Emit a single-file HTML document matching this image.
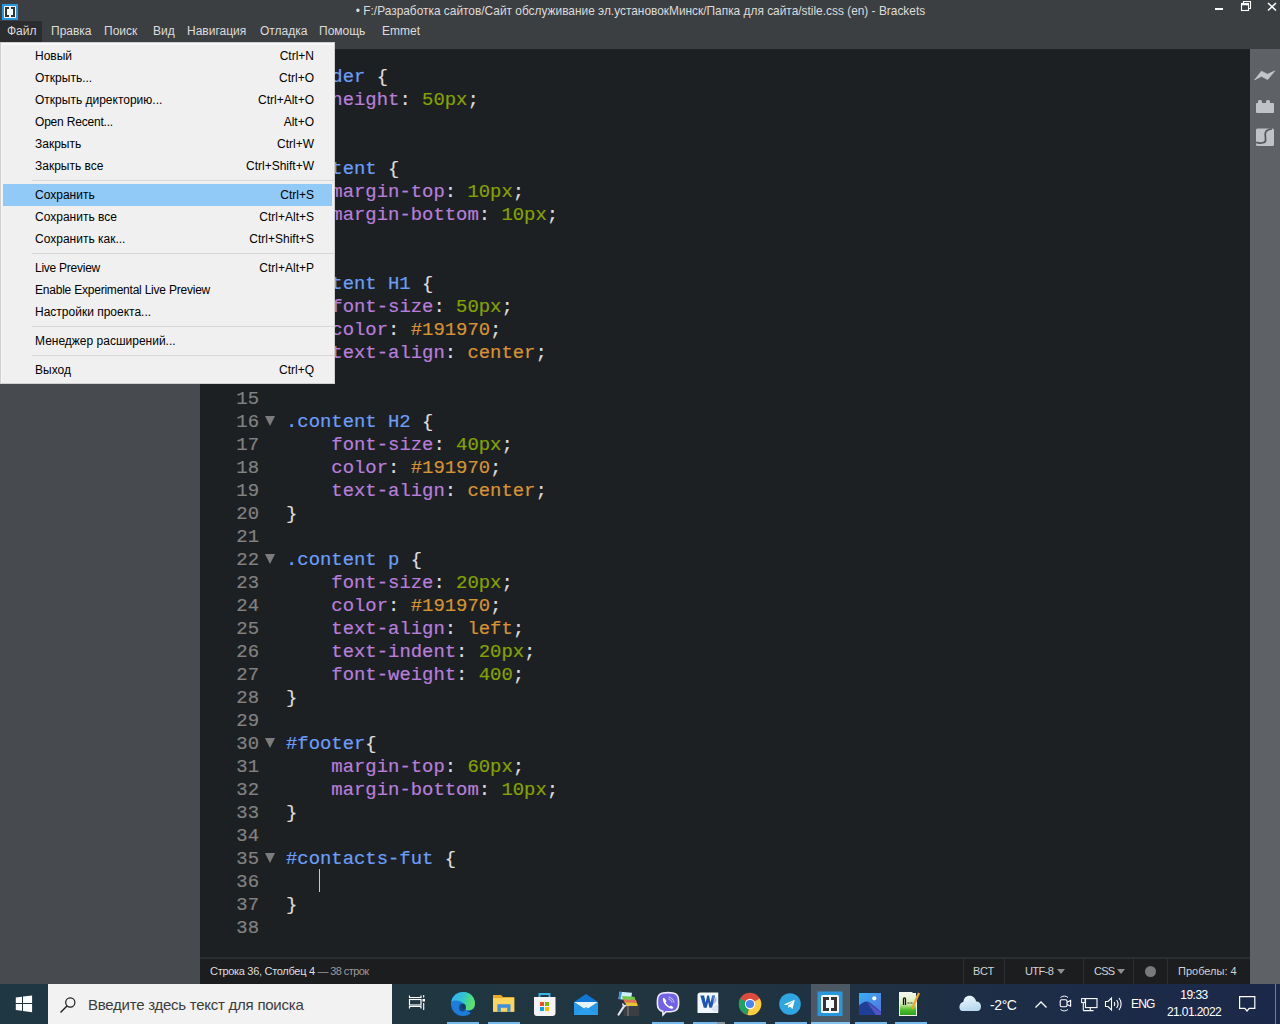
<!DOCTYPE html>
<html><head><meta charset="utf-8">
<style>
*{margin:0;padding:0;box-sizing:border-box}
html,body{width:1280px;height:1024px;overflow:hidden;background:#3c3f41;font-family:"Liberation Sans",sans-serif}
.abs{position:absolute}
#title{left:0;top:0;width:1280px;height:49px;background:#3c3f41}
#ttext{left:0;top:3px;width:1280px;text-align:center;color:#dcdcdc;font-size:11.9px;line-height:16px;white-space:nowrap;padding-left:1px}
.mb{top:23px;color:#dcdcdc;font-size:12px;line-height:16px;white-space:nowrap}
#sidebar{left:0;top:49px;width:200px;height:935px;background:#474a4e}
#editor{left:200px;top:49px;width:1050px;height:908px;background:#1d2023}
#rtool{left:1250px;top:49px;width:30px;height:935px;background:#5e6165}
#status{left:200px;top:957px;width:1050px;height:27px;background:#1c1d1f;border-top:2px solid #2b2d30}
.st{color:#d2d2d2;font-size:11px;line-height:14px;white-space:nowrap;top:964px}
.sep{top:959px;width:1px;height:25px;background:#2c2e31}
#code{left:200px;top:49px;width:1050px;height:908px;font-family:"Liberation Mono",monospace;font-size:18.9px;white-space:pre;-webkit-text-stroke:0.2px}
.ln{position:absolute;left:0;width:59px;text-align:right;color:#828282;height:23px;line-height:23px}
.cl{position:absolute;left:86px;color:#dddddd;height:23px;line-height:23px}
.p{color:#b77fdb}.n{color:#85a300}.q{color:#6c9ef8}.a{color:#d89333}
.fold{position:absolute;left:65px;width:0;height:0;border-left:5px solid transparent;border-right:5px solid transparent;border-top:10px solid #7c7c7c}
#menu{left:0;top:42px;width:335px;height:342px;background:#f0f0f0;border:1px solid #cfcfcf;box-shadow:inset 1px 2px 0 #f8f8f8}
.mi{position:absolute;left:34px;font-size:12px;line-height:16px;color:#000;white-space:nowrap}
.mk{position:absolute;right:20px;font-size:12px;line-height:16px;color:#000;white-space:nowrap;text-align:right}
.msep{position:absolute;left:31px;width:302px;height:1px;background:#d7d7d7}
#taskbar{left:0;top:984px;width:1280px;height:40px;background:linear-gradient(90deg,#1f3742 0%,#20353f 50%,#1f3143 68%,#1c2b48 85%,#1c2849 100%)}
.tb{color:#ffffff;font-size:12px;line-height:15px;white-space:nowrap}
</style></head><body>
<div id="title" class="abs"></div>
<div id="ttext" class="abs">• F:/Разработка сайтов/Сайт обслуживание эл.установокМинск/Папка для сайта/stile.css (en) - Brackets</div>
<div id="sidebar" class="abs"></div>
<div id="editor" class="abs"></div>
<div id="rtool" class="abs"></div>
<div id="status" class="abs"></div>
<div id="code" class="abs">
<div class="ln" style="top:17px">1</div>
<div class="fold" style="top:22px"></div>
<div class="cl" style="top:17px"><span class="q">#header</span> {</div>
<div class="ln" style="top:40px">2</div>
<div class="cl" style="top:40px">    <span class="p">height</span>: <span class="n">50px</span>;</div>
<div class="ln" style="top:63px">3</div>
<div class="cl" style="top:63px">}</div>
<div class="ln" style="top:86px">4</div>
<div class="ln" style="top:109px">5</div>
<div class="fold" style="top:114px"></div>
<div class="cl" style="top:109px"><span class="q">.content</span> {</div>
<div class="ln" style="top:132px">6</div>
<div class="cl" style="top:132px">    <span class="p">margin-top</span>: <span class="n">10px</span>;</div>
<div class="ln" style="top:155px">7</div>
<div class="cl" style="top:155px">    <span class="p">margin-bottom</span>: <span class="n">10px</span>;</div>
<div class="ln" style="top:178px">8</div>
<div class="cl" style="top:178px">}</div>
<div class="ln" style="top:201px">9</div>
<div class="ln" style="top:224px">10</div>
<div class="fold" style="top:229px"></div>
<div class="cl" style="top:224px"><span class="q">.content H1</span> {</div>
<div class="ln" style="top:247px">11</div>
<div class="cl" style="top:247px">    <span class="p">font-size</span>: <span class="n">50px</span>;</div>
<div class="ln" style="top:270px">12</div>
<div class="cl" style="top:270px">    <span class="p">color</span>: <span class="a">#191970</span>;</div>
<div class="ln" style="top:293px">13</div>
<div class="cl" style="top:293px">    <span class="p">text-align</span>: <span class="a">center</span>;</div>
<div class="ln" style="top:316px">14</div>
<div class="ln" style="top:339px">15</div>
<div class="ln" style="top:362px">16</div>
<div class="fold" style="top:367px"></div>
<div class="cl" style="top:362px"><span class="q">.content H2</span> {</div>
<div class="ln" style="top:385px">17</div>
<div class="cl" style="top:385px">    <span class="p">font-size</span>: <span class="n">40px</span>;</div>
<div class="ln" style="top:408px">18</div>
<div class="cl" style="top:408px">    <span class="p">color</span>: <span class="a">#191970</span>;</div>
<div class="ln" style="top:431px">19</div>
<div class="cl" style="top:431px">    <span class="p">text-align</span>: <span class="a">center</span>;</div>
<div class="ln" style="top:454px">20</div>
<div class="cl" style="top:454px">}</div>
<div class="ln" style="top:477px">21</div>
<div class="ln" style="top:500px">22</div>
<div class="fold" style="top:505px"></div>
<div class="cl" style="top:500px"><span class="q">.content p</span> {</div>
<div class="ln" style="top:523px">23</div>
<div class="cl" style="top:523px">    <span class="p">font-size</span>: <span class="n">20px</span>;</div>
<div class="ln" style="top:546px">24</div>
<div class="cl" style="top:546px">    <span class="p">color</span>: <span class="a">#191970</span>;</div>
<div class="ln" style="top:569px">25</div>
<div class="cl" style="top:569px">    <span class="p">text-align</span>: <span class="a">left</span>;</div>
<div class="ln" style="top:592px">26</div>
<div class="cl" style="top:592px">    <span class="p">text-indent</span>: <span class="n">20px</span>;</div>
<div class="ln" style="top:615px">27</div>
<div class="cl" style="top:615px">    <span class="p">font-weight</span>: <span class="n">400</span>;</div>
<div class="ln" style="top:638px">28</div>
<div class="cl" style="top:638px">}</div>
<div class="ln" style="top:661px">29</div>
<div class="ln" style="top:684px">30</div>
<div class="fold" style="top:689px"></div>
<div class="cl" style="top:684px"><span class="q">#footer</span>{</div>
<div class="ln" style="top:707px">31</div>
<div class="cl" style="top:707px">    <span class="p">margin-top</span>: <span class="n">60px</span>;</div>
<div class="ln" style="top:730px">32</div>
<div class="cl" style="top:730px">    <span class="p">margin-bottom</span>: <span class="n">10px</span>;</div>
<div class="ln" style="top:753px">33</div>
<div class="cl" style="top:753px">}</div>
<div class="ln" style="top:776px">34</div>
<div class="ln" style="top:799px">35</div>
<div class="fold" style="top:804px"></div>
<div class="cl" style="top:799px"><span class="q">#contacts-fut</span> {</div>
<div class="ln" style="top:822px">36</div>
<div class="cl" style="top:822px">    </div>
<div class="ln" style="top:845px">37</div>
<div class="cl" style="top:845px">}</div>
<div class="ln" style="top:868px">38</div>
</div>
<div id="taskbar" class="abs"></div>
<!--STATUS-->
<div class="abs st" style="left:210px;color:#dedede;letter-spacing:-0.3px">Строка 36, Столбец 4 <span style="color:#9a9a9a;letter-spacing:-0.6px">— 38 строк</span></div>
<div class="abs sep" style="left:963px"></div>
<div class="abs sep" style="left:1004px"></div>
<div class="abs sep" style="left:1083px"></div>
<div class="abs sep" style="left:1133px"></div>
<div class="abs sep" style="left:1167px"></div>
<div class="abs st" style="left:973px">ВСТ</div>
<div class="abs st" style="left:1025px;letter-spacing:-0.6px">UTF-8</div>
<div class="abs" style="left:1057px;top:969px;width:0;height:0;border-left:4px solid transparent;border-right:4px solid transparent;border-top:5px solid #8f8f8f"></div>
<div class="abs st" style="left:1094px;letter-spacing:-0.8px">CSS</div>
<div class="abs" style="left:1117px;top:969px;width:0;height:0;border-left:4px solid transparent;border-right:4px solid transparent;border-top:5px solid #8f8f8f"></div>
<div class="abs" style="left:1145px;top:966px;width:11px;height:11px;border-radius:50%;background:#7a7a7a"></div>
<div class="abs st" style="left:1178px">Пробелы: 4</div>
<!--/STATUS-->
<!--RTOOL-->
<svg class="abs" style="left:1250px;top:49px" width="30" height="110" viewBox="0 0 30 110">
<path d="M4.6 30.9 L11.4 22.2 L17.5 25.2 L24.8 21.9 L17.6 30.6 L11.4 27.3 Z" fill="#c3c6c9" stroke="#c3c6c9" stroke-width="0.7" stroke-linejoin="round"/>
<rect x="6" y="54" width="18" height="10" rx="1" fill="#c0c3c6"/>
<rect x="8" y="51" width="4" height="4" rx="1.5" fill="#c0c3c6"/>
<rect x="16" y="51" width="4" height="4" rx="1.5" fill="#c0c3c6"/>
<rect x="6" y="79.5" width="18" height="17.5" rx="1.5" fill="#c0c3c6"/>
<path d="M21.8 79.8 C17.5 80.3 15.2 81.8 15.2 85 L15.6 91.2 C15.7 93.6 11 95 6.2 93.4" stroke="#53565a" stroke-width="1.7" fill="none"/>
</svg>
<!--/RTOOL-->
<!--TASKBAR-->
<svg class="abs" style="left:0;top:984px" width="1280" height="40" viewBox="0 0 1280 40">
<!-- start -->
<path d="M15.8 13.6 L22 12.7 L22 19 L15.8 19 Z M23 12.5 L32.1 11.6 L32.1 19 L23 19 Z M15.8 20 L22 20 L22 26.7 L15.8 26 Z M23 20 L32.1 20 L32.1 28.2 L23 26.9 Z" fill="#ffffff"/>
<!-- search box -->
<rect x="48" y="0" width="344" height="40" fill="#f2f2f2"/>
<circle cx="70.3" cy="18.5" r="4.6" fill="none" stroke="#1a1a1a" stroke-width="1.2"/>
<path d="M67.2 21.8 L60.5 28.5" stroke="#1a1a1a" stroke-width="1.3"/>
<!-- task view -->
<path d="M409.5 11.5 V13.5 H421 V11.5 M409.5 24.5 V22.5 H421 V24.5" fill="none" stroke="#fff" stroke-width="1.2"/>
<rect x="409.5" y="15.5" width="11.5" height="5.5" fill="none" stroke="#fff" stroke-width="1.2"/>
<rect x="422.5" y="15" width="2.5" height="2.5" fill="#fff"/>
<path d="M423.7 11 V13.5 M423.7 19 V26" stroke="#fff" stroke-width="1.1"/>
<!-- edge -->
<defs><linearGradient id="eg" x1="0" y1="0" x2="1" y2="0.3"><stop offset="0" stop-color="#3aaef2"/><stop offset="0.5" stop-color="#30c2d6"/><stop offset="0.8" stop-color="#48d890"/><stop offset="1" stop-color="#5ee06a"/></linearGradient></defs>
<g transform="translate(463,20)">
<circle r="12" fill="#1c7ddb"/>
<path d="M3.5 6.8 C8.5 7 11.5 4.5 12.2 1.5 A12.2 12.2 0 0 1 8.5 9.2 Z" fill="#1b3552"/>
<path d="M-11.6 -2.5 C-10.5 -9 -5 -12 0.5 -12 C7.5 -12 12 -6.5 12 -0.5 C12 4.5 8.5 6.5 4.5 6.3 C1.5 6 0 3.5 1.5 0.5 C-2 -4 -8 -4.5 -11.6 -2.5 Z" fill="url(#eg)"/>
<ellipse cx="-0.5" cy="3.5" rx="3.5" ry="4" fill="#174a86"/>
<ellipse cx="0.3" cy="2.5" rx="2" ry="2.5" fill="#163a62"/>
</g>
<rect x="447" y="38" width="32" height="2" fill="#76b9ed"/>
<!-- explorer -->
<g transform="translate(492,9)">
<path d="M1 2 H9 L11 4 H22.25 V18.75 H1 Z" fill="#e9a82a"/>
<rect x="1" y="5" width="21.25" height="13.75" fill="#fcd55e"/>
<path d="M5.4 18.75 V11.25 H18.5 V18.75 H15.2 V14.8 H8.8 V18.75 Z" fill="#3d8fdf"/>
</g>
<rect x="488" y="38" width="32" height="2" fill="#76b9ed"/>
<!-- store -->
<g transform="translate(533,9)">
<path d="M6.5 5 V1 H16.5 V5" fill="none" stroke="#3cb2e8" stroke-width="1.9"/>
<path d="M1 4 H22.5 V20 Q22.5 23 19.5 23 H4 Q1 23 1 20 Z" fill="#f6f4f6"/>
<rect x="7" y="9" width="4" height="4" fill="#f25022"/>
<rect x="12" y="9" width="4" height="4" fill="#7fba00"/>
<rect x="7" y="14" width="4" height="4" fill="#00a4ef"/>
<rect x="12" y="14" width="4" height="4" fill="#ffb900"/>
</g>
<!-- mail -->
<g transform="translate(574,9)">
<path d="M0 9 L12 1 L24 9 V22 H0 Z" fill="#0f78d4"/>
<path d="M0 9 H24 L12 17 Z" fill="#e6f2fc"/>
<path d="M0 22 L12 14 L24 22 Z" fill="#31a7f0"/>
<path d="M0 9 L12 17 L24 9 V22 H0 Z" fill="#2a9cec" opacity="0.85"/>
</g>
<!-- winrar-ish -->
<path d="M624 20.5 H639.5 L639 32 H623.5 Z" fill="#3b3e42"/>
<path d="M619.5 7.8 L632 8.8 L631 16.5 L618.5 15 Z" fill="#cdeefc"/>
<path d="M619.5 7.8 L622 8 L620.5 15.2 L618.5 15 Z" fill="#3f8fd8"/>
<path d="M622 12 L634.5 12.8 L635.5 16 L623 15.8 Z" fill="#74c848"/>
<path d="M623.2 15.5 L636 16 L637 19.2 L624.8 19 Z" fill="#e27454"/>
<path d="M625 18.5 L637 19 L637.8 22 L627 22 Z" fill="#e8c534"/>
<path d="M618.6 30.5 L624.2 21.8" stroke="#e4e4ec" stroke-width="2.2" stroke-linecap="round"/>
<path d="M622.5 19.5 L623.8 22.2 L626.6 21.2" stroke="#e4e4ec" stroke-width="1.6" fill="none"/>
<rect x="627.5" y="22" width="1" height="10" fill="#8a8d90"/>
<!-- viber -->
<g transform="translate(668,20)">
<path d="M-10.6 -3 C-10.6 -10 -7 -11.4 0 -11.4 C7 -11.4 10.6 -10 10.6 -3 V0 C10.6 6 7.5 7.8 0 7.8 H-2 L-5 10.8 L-5.2 7.4 C-9 6.5 -10.6 4.2 -10.6 0 Z" fill="#7262e6" stroke="#efe9ff" stroke-width="1.6"/>
<path d="M-4.6 -6.2 C-5.8 -5 -5 -1.5 -2 1.6 C1 4.6 3.8 5.4 5 4.2 L5.3 3.2 L2.8 1.6 L1.6 2.5 C0.2 1.8 -1.8 -0.2 -2.4 -1.6 L-1.5 -2.8 L-3.2 -5.6 Z" fill="#ffffff"/>
<path d="M0.5 -7 C3.5 -6.5 5.5 -4.5 6 -1.5 M0.5 -5 C2.5 -4.5 3.8 -3.2 4 -1.5" fill="none" stroke="#d8d0ff" stroke-width="0.9"/>
</g>
<rect x="652" y="38" width="32" height="2" fill="#76b9ed"/>
<!-- word -->
<g transform="translate(697.5,8.5)">
<path d="M3 0 H20.75 V20.5 H0 V3 Q0 0 3 0 Z" fill="#f2f8ff"/>
<path d="M2.8 3 H6.6 L8.1 10.2 L9.7 3 H11.5 L13.1 10.2 L14.6 3 H17.6 L14.6 15.2 H11.9 L10.6 9.6 L9.3 15.2 H6.3 Z" fill="#1d55b5"/>
<path d="M13.5 15.5 L20.75 11.5 V18.5 L16 19.5 Z" fill="#dde6f2"/>
<path d="M14.6 3 H17.6 L16.5 7.5 L19 4 V9 L15.5 12 Z" fill="#7d8fd8" opacity="0.6"/>
</g>
<rect x="693" y="38" width="24" height="2" fill="#76b9ed"/>
<rect x="717" y="38" width="8" height="2" fill="#8a97a3"/>
<!-- chrome -->
<g transform="translate(750,20)">
<circle r="11.2" fill="#dd4b3e"/>
<path d="M0 0 L-9.7 -5.6 A11.2 11.2 0 0 0 -2.5 10.9 Z" fill="#1da462"/>
<path d="M0 0 L9.7 -5.6 A11.2 11.2 0 0 1 -2.5 10.9 Z" fill="#ffcd40"/>
<circle r="5.2" fill="#ffffff"/>
<circle r="4.1" fill="#4a86f0"/>
</g>
<rect x="734" y="38" width="32" height="2" fill="#76b9ed"/>
<!-- telegram -->
<g transform="translate(790,20)">
<circle r="10.8" fill="#2ea6e0"/>
<path d="M-6.3 0.4 L4.8 -4.2 L2.5 4.9 L-0.6 2.4 L-1.6 4.3 L-1.9 1.4 L3.3 -2.8 L-3.1 1.1 Z" fill="#ffffff"/>
</g>
<rect x="775" y="38" width="32" height="2" fill="#76b9ed"/>
<!-- brackets active -->
<rect x="811" y="0" width="39" height="40" fill="#4c5863"/>
<rect x="817.5" y="991.5" width="25" height="24.5" fill="#2a96dc" transform="translate(0,-984)"/>
<rect x="821" y="11" width="18" height="18" rx="1.5" fill="#f4fbff"/>
<path d="M823 13 H829 V16 H826 V24 H829 V27 H823 Z M831 13 H837 V27 H831 V24 H834 V16 H831 Z" fill="#3a3230"/>
<rect x="811" y="38" width="39" height="2" fill="#86c2f0"/>
<!-- photos -->
<defs><linearGradient id="pg" x1="0" y1="0" x2="1" y2="1"><stop offset="0" stop-color="#35b0f2"/><stop offset="1" stop-color="#5a6fe0"/></linearGradient></defs>
<g transform="translate(859,9)">
<rect x="0" y="0" width="22" height="22" fill="url(#pg)"/>
<path d="M0 12.5 C3 10 5.5 8.5 7.5 8.5 C10 8.5 16 13.5 22 19 V22 H0 Z" fill="#1f3e98"/>
<path d="M8 9.2 C11 10.5 17 15.5 22 19.5 V22 H17 Z" fill="#6a5ed8" opacity="0.7"/>
<circle cx="15.3" cy="5.3" r="2.1" fill="#ffffff"/>
</g>
<rect x="855" y="38" width="32" height="2" fill="#76b9ed"/>
<!-- notepad-ish -->
<defs><linearGradient id="ng" x1="0" y1="0" x2="0" y2="1"><stop offset="0" stop-color="#f4f6f0"/><stop offset="0.5" stop-color="#d8ecb0"/><stop offset="0.75" stop-color="#52c030"/><stop offset="1" stop-color="#30a020"/></linearGradient></defs>
<g transform="translate(899,8)">
<path d="M0 0 H13 L18 5 V24 H0 Z" fill="#f0f4ea"/>
<rect x="1" y="1" width="16" height="22" fill="url(#ng)"/>
<path d="M4.5 7 C4.5 5.5 6.5 5.5 6.5 7 V13 M4.5 7 V13" stroke="#111" stroke-width="1.3" fill="none"/>
<path d="M8.5 11 H10.5 M11.5 11 H13.5" stroke="#222" stroke-width="1.2"/>
<path d="M13 17 L20 1" stroke="#e8a820" stroke-width="2.2"/>
</g>
<rect x="895" y="38" width="32" height="2" fill="#76b9ed"/>
<!-- tray: cloud -->
<defs><linearGradient id="cg" x1="0" y1="0" x2="0.3" y2="1"><stop offset="0" stop-color="#f2faff"/><stop offset="1" stop-color="#b9d9ef"/></linearGradient></defs>
<path d="M962.5 27 H977 C979.8 27 981 25 981 22.5 C981 19.6 979 17.6 976.2 17.6 C975.4 13.8 972.4 11.8 969.4 11.8 C966.2 11.8 963.8 14 963.4 17.8 C961.2 18.4 959.4 20.4 959.4 23 C959.4 25.4 960.8 27 962.5 27 Z" fill="url(#cg)"/>
<!-- chevron -->
<path d="M1035.5 23.5 L1041 18 L1046.5 23.5" fill="none" stroke="#fff" stroke-width="1.3"/>
<!-- meet now -->
<rect x="1060.2" y="15.8" width="6.8" height="7" rx="1.5" fill="none" stroke="#fff" stroke-width="1.1"/>
<path d="M1067 18.3 L1070.6 16.5 V22.2 L1067 20.5" fill="none" stroke="#fff" stroke-width="1.1"/>
<path d="M1060.5 13.5 C1062.5 11.6 1066 11.6 1068 13.5 M1060.5 25.5 C1062.5 27.4 1066 27.4 1068 25.5" fill="none" stroke="#fff" stroke-width="1"/>
<!-- network -->
<rect x="1085.5" y="14.6" width="11.5" height="9" fill="none" stroke="#fff" stroke-width="1.1"/>
<rect x="1081.6" y="14.6" width="3.4" height="4" fill="none" stroke="#fff" stroke-width="1"/>
<path d="M1083.3 18.6 V26.6 M1083.3 26.6 H1093.5 M1090.3 23.6 V26.6" fill="none" stroke="#fff" stroke-width="1.1"/>
<!-- volume -->
<path d="M1105.5 17.5 H1108 L1111.5 14 V26 L1108 22.5 H1105.5 Z" fill="none" stroke="#fff" stroke-width="1.1"/>
<path d="M1114.2 18 C1115 19.3 1115 20.7 1114.2 22 M1116.6 16 C1118.3 18.3 1118.3 21.7 1116.6 24 M1119 14 C1121.8 17.5 1121.8 22.5 1119 26" fill="none" stroke="#fff" stroke-width="1.1"/>
<!-- notification -->
<path d="M1239.6 12.6 H1254.8 V24.4 H1249.2 L1247 27 L1244.8 24.4 H1239.6 Z" fill="none" stroke="#fff" stroke-width="1.2"/>
<rect x="1275" y="0" width="1" height="40" fill="#7080a0"/>
</svg>
<div class="abs" style="left:88px;top:996px;font-size:15px;line-height:18px;color:#3c3c3c;white-space:nowrap;letter-spacing:-0.25px">Введите здесь текст для поиска</div>
<div class="abs tb" style="left:990px;top:998px;font-size:14px;letter-spacing:-0.4px">-2°C</div>
<div class="abs tb" style="left:1131px;top:997px;letter-spacing:-0.8px">ENG</div>
<div class="abs tb" style="left:1167px;top:988px;width:54px;text-align:center;letter-spacing:-0.5px">19:33</div>
<div class="abs tb" style="left:1164px;top:1005px;width:60px;text-align:center;letter-spacing:-0.6px">21.01.2022</div>
<!--/TASKBAR-->
<!--TITLEBAR-->
<svg class="abs" style="left:0;top:0" width="24" height="24" viewBox="0 0 24 24">
<rect x="2" y="4" width="16" height="16" fill="#2a96dc"/>
<rect x="4" y="6" width="12" height="12" rx="1" fill="#f4fbff"/>
<path d="M5 7 H9 V9 H7 V15 H9 V17 H5 Z M11 7 H15 V17 H11 V15 H13 V9 H11 Z" fill="#33302e"/>
</svg>
<svg class="abs" style="left:1200px;top:0" width="80" height="20" viewBox="0 0 80 20">
<rect x="15" y="8" width="8" height="2" fill="#ffffff"/>
<path d="M43.5 3.5 V1.5 H50.5 V8.5 H49" fill="none" stroke="#fff" stroke-width="1.1"/>
<rect x="41.5" y="3.5" width="7" height="7" fill="none" stroke="#fff" stroke-width="1.1"/>
<rect x="41.5" y="3.5" width="7" height="1.8" fill="#fff"/>
<path d="M68 3 L76 10.5 M76 3 L68 10.5" stroke="#fff" stroke-width="1.5"/>
</svg>
<div class="abs" style="left:319px;top:869px;width:1px;height:23px;background:#c8c8c8"></div>
<!--/TITLEBAR-->
<!--MENUBAR-->
<div class="abs" style="left:0;top:21px;width:42px;height:21px;background:#2a2c2e"></div>
<div class="abs mb" style="left:7px">Файл</div>
<div class="abs mb" style="left:51px">Правка</div>
<div class="abs mb" style="left:104px">Поиск</div>
<div class="abs mb" style="left:153px">Вид</div>
<div class="abs mb" style="left:187px">Навигация</div>
<div class="abs mb" style="left:260px">Отладка</div>
<div class="abs mb" style="left:319px">Помощь</div>
<div class="abs mb" style="left:382px">Emmet</div>
<!--/MENUBAR-->
<!--MENU-->
<div id="menu" class="abs">
<div class="abs" style="left:2px;top:141px;width:329px;height:22px;background:#91c9f7"></div>
<div class="msep" style="top:137px"></div>
<div class="msep" style="top:210px"></div>
<div class="msep" style="top:283px"></div>
<div class="msep" style="top:312px"></div>
<div class="mi" style="top:5px">Новый</div><div class="mk" style="top:5px">Ctrl+N</div>
<div class="mi" style="top:27px">Открыть...</div><div class="mk" style="top:27px">Ctrl+O</div>
<div class="mi" style="top:49px">Открыть директорию...</div><div class="mk" style="top:49px">Ctrl+Alt+O</div>
<div class="mi" style="top:71px;letter-spacing:-0.2px">Open Recent...</div><div class="mk" style="top:71px">Alt+O</div>
<div class="mi" style="top:93px">Закрыть</div><div class="mk" style="top:93px">Ctrl+W</div>
<div class="mi" style="top:115px">Закрыть все</div><div class="mk" style="top:115px">Ctrl+Shift+W</div>
<div class="mi" style="top:144px">Сохранить</div><div class="mk" style="top:144px">Ctrl+S</div>
<div class="mi" style="top:166px">Сохранить все</div><div class="mk" style="top:166px">Ctrl+Alt+S</div>
<div class="mi" style="top:188px">Сохранить как...</div><div class="mk" style="top:188px">Ctrl+Shift+S</div>
<div class="mi" style="top:217px;letter-spacing:-0.25px">Live Preview</div><div class="mk" style="top:217px">Ctrl+Alt+P</div>
<div class="mi" style="top:239px;letter-spacing:-0.22px">Enable Experimental Live Preview</div>
<div class="mi" style="top:261px">Настройки проекта...</div>
<div class="mi" style="top:290px">Менеджер расширений...</div>
<div class="mi" style="top:319px">Выход</div><div class="mk" style="top:319px">Ctrl+Q</div>
</div>
<!--/MENU-->

</body></html>
